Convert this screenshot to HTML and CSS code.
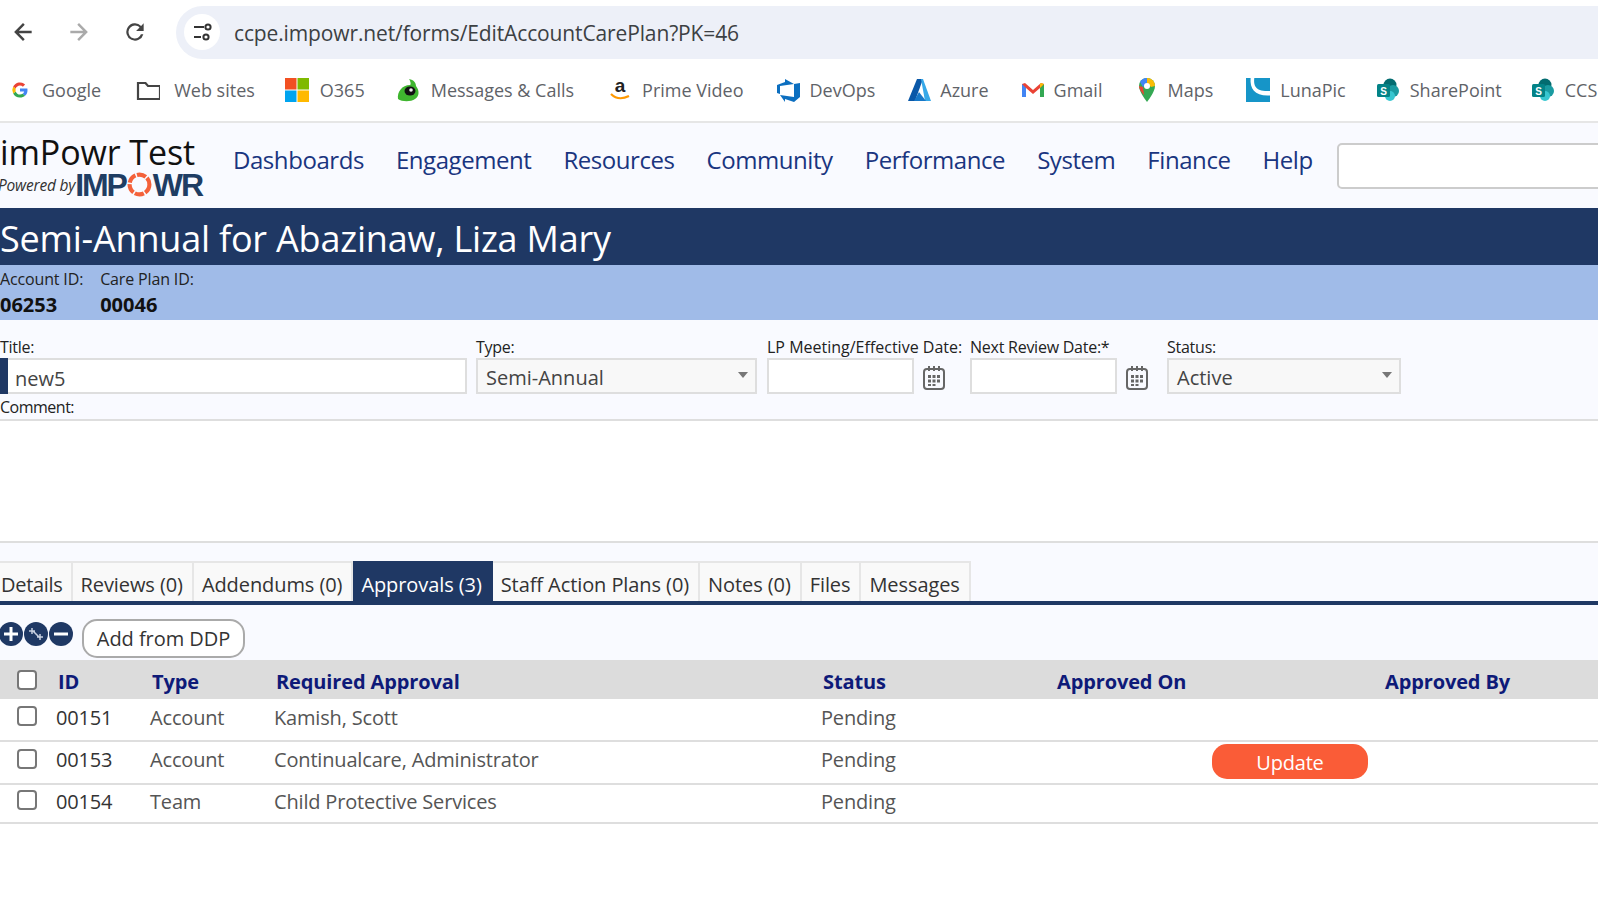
FILE: index.html
```html
<!DOCTYPE html>
<html lang="en">
<head>
<meta charset="utf-8">
<title>Semi-Annual for Abazinaw, Liza Mary</title>
<link rel="stylesheet" href="styles.css">
</head>
<body>
<div class="toolbar">
  <svg class="nav-ic" viewBox="0 0 24 24"><path d="M20 10.800H8.200l5.400-5.400L12 3.800 3.800 12l8.200 8.200 1.600-1.600-5.400-5.400H20z" fill="#444"/></svg>
  <svg class="nav-ic" viewBox="0 0 24 24"><path d="M4 10.800h11.800l-5.400-5.400L12 3.800l8.200 8.200-8.200 8.200-1.600-1.600 5.400-5.400H4z" fill="#aaa"/></svg>
  <svg class="nav-ic" viewBox="0 0 24 24"><path d="M17.650 6.350A8 8 0 1 0 19.730 14h-2.280A5.900 5.900 0 1 1 12 6.100c1.640 0 3.100.68 4.170 1.730L13 11h7V4z" fill="#444"/></svg>
  <div class="omnibox">
    <span class="site-ic"><svg viewBox="0 0 24 24" width="24" height="24"><path d="M4 7h10M4 17h7" stroke="#333" stroke-width="2.200" fill="none"/><circle cx="18" cy="7" r="2.600" fill="none" stroke="#333" stroke-width="2"/><circle cx="16" cy="17" r="2.600" fill="none" stroke="#333" stroke-width="2"/></svg></span>
    <span class="url">ccpe.impowr.net/forms/EditAccountCarePlan?PK=46</span>
  </div>
</div>
<div class="bookmarks">
  <span class="bm bm-g"><svg viewBox="0 0 24 24"><path d="M21 12.200c0-.7-.1-1.300-.2-1.900H12v3.600h5a4.300 4.300 0 0 1-1.900 2.800l3 2.300c1.800-1.600 2.900-4 2.900-6.800z" fill="#4285f4"/><path d="M12 21c2.500 0 4.500-.8 6.100-2.100l-3-2.300c-.8.600-1.900.900-3.100.900-2.400 0-4.400-1.600-5.100-3.800l-3.100 2.400A9 9 0 0 0 12 21z" fill="#34a853"/><path d="M6.900 13.700a5.400 5.400 0 0 1 0-3.400L3.800 7.900a9 9 0 0 0 0 8.200z" fill="#fbbc05"/><path d="M12 6.600c1.300 0 2.500.5 3.500 1.400l2.600-2.600A9 9 0 0 0 3.800 7.900l3.100 2.400C7.600 8.200 9.600 6.600 12 6.600z" fill="#ea4335"/></svg>Google</span>
  <span class="bm bm-f"><svg viewBox="0 0 24 24"><path d="M2 5v16h22V8H12L9.500 5H2z" fill="none" stroke="#444" stroke-width="2.200"/></svg>Web sites</span>
  <span class="bm bm-o"><svg viewBox="0 0 24 24"><rect width="11.500" height="11.500" fill="#f25022"/><rect x="12.500" width="11.500" height="11.500" fill="#7fba00"/><rect y="12.500" width="11.500" height="11.500" fill="#00a4ef"/><rect x="12.500" y="12.500" width="11.500" height="11.500" fill="#ffb900"/></svg>O365</span>
  <span class="bm bm-m"><svg viewBox="0 0 24 24"><path d="M1 21c-1-7 4-14 12-14 1 0 1-3-1-6 5 1 7 4 7 7 4 5 3 11-1 13-4 3-13 3-17 0z" fill="#3fb52f"/><ellipse cx="13" cy="13" rx="5.500" ry="4.500" fill="#111"/><circle cx="14" cy="12" r="1.800" fill="#eee"/></svg>Messages &amp; Calls</span>
  <span class="bm bm-a"><svg viewBox="0 0 24 24"><text x="12" y="14" class="amz">a</text><path d="M3 16c5 5 12 5 18 2" fill="none" stroke="#f90" stroke-width="2.200"/></svg>Prime Video</span>
  <span class="bm bm-d"><svg viewBox="0 0 24 24"><path d="M24 5v14l-6 5-9-3v3l-5-7 14 2V6zM18 6L9 1v3L1 7v8l3 1V8z" fill="#0c6fc0"/></svg>DevOps</span>
  <span class="bm bm-z"><svg viewBox="0 0 24 24"><path d="M9 1h6L7 23H0z" fill="#0a58a8"/><path d="M13 1h2l8 22h-6z" fill="#36a8e8"/><path d="M11 14l7 9H6z" fill="#1778c8"/></svg>Azure</span>
  <span class="bm bm-l"><svg viewBox="0 0 24 24"><path d="M1 6v13h4V10l7 6 7-6v9h4V6l-3-1-8 7-8-7z" fill="#ea4335"/><path d="M1 6v13h4V10z" fill="#4285f4"/><path d="M19 10v9h4V6z" fill="#34a853"/><path d="M20 5l3 1-4 4v-4z" fill="#fbbc05"/></svg>Gmail</span>
  <span class="bm bm-p"><svg viewBox="0 0 24 24"><path d="M12 0a8 8 0 0 0-8 8c0 6 8 16 8 16s8-10 8-16a8 8 0 0 0-8-8z" fill="#34a853"/><path d="M5 4a8 8 0 0 1 7-4v5L8 9z" fill="#4285f4"/><path d="M12 0a8 8 0 0 1 8 8l-4 1-4-4z" fill="#fbbc05"/><path d="M4 8l4 1 1 8c-2-2-5-6-5-9z" fill="#ea4335"/><circle cx="12" cy="8" r="3" fill="#fff"/></svg>Maps</span>
  <span class="bm bm-u"><svg viewBox="0 0 26 26"><rect width="26" height="26" fill="#1695c8"/><path d="M5 0h4c-1 8 1 15 17 14v5C10 20 4 12 5 0z" fill="#fff"/></svg>LunaPic</span>
  <span class="bm bm-s"><svg viewBox="0 0 24 24"><circle cx="14" cy="7" r="6.500" fill="#036c70"/><circle cx="17" cy="13" r="6" fill="#1a9ba1"/><circle cx="14" cy="18" r="5" fill="#37c6d0"/><rect x="1" y="6" width="13" height="13" rx="1.500" fill="#038387"/><text x="7.500" y="16.500" class="sp">S</text></svg>SharePoint</span>
  <span class="bm bm-c"><svg viewBox="0 0 24 24"><circle cx="14" cy="7" r="6.500" fill="#036c70"/><circle cx="17" cy="13" r="6" fill="#1a9ba1"/><circle cx="14" cy="18" r="5" fill="#37c6d0"/><rect x="1" y="6" width="13" height="13" rx="1.500" fill="#038387"/><text x="7.500" y="16.500" class="sp">S</text></svg>CCS</span>
</div>
<header class="site-head">
  <div class="brand">
    <div class="brand-name">imPowr Test</div>
    <div class="brand-sub"><span class="powered">Powered by</span><span class="logo">IMP<svg class="logo-o" viewBox="0 0 24 24"><circle cx="12" cy="12" r="9.500" fill="none" stroke="#f4613a" stroke-width="4" stroke-dasharray="9 1.500"/></svg>WR</span></div>
  </div>
  <nav class="menu">
    <a>Dashboards</a><a>Engagement</a><a>Resources</a><a>Community</a><a>Performance</a><a>System</a><a>Finance</a><a>Help</a>
  </nav>
  <div class="search"></div>
</header>
<h1 class="title-bar">Semi-Annual for Abazinaw, Liza Mary</h1>
<div class="id-bar">
  <div><div class="id-label">Account ID:</div><div class="id-val">06253</div></div>
  <div><div class="id-label">Care Plan ID:</div><div class="id-val">00046</div></div>
</div>
<section class="form">
  <div class="fields">
    <div class="field f-title"><label>Title:</label><div class="input title-input"><span class="req"></span><span class="title-val">new5</span></div></div>
    <div class="field f-type"><label>Type:</label><div class="input select">Semi-Annual<i class="caret"></i></div></div>
    <div class="field f-date"><label>LP Meeting/Effective Date:</label><div class="date-row"><div class="input date"></div><svg class="cal" viewBox="0 0 22 24"><rect x="1" y="3" width="20" height="20" rx="3" fill="none" stroke="#666" stroke-width="2"/><path d="M6 0v5M11 0v5M16 0v5" stroke="#666" stroke-width="2"/><path d="M5 9h3v3H5zM9.500 9h3v3h-3zM14 9h3v3h-3zM5 13.500h3v3H5zM9.500 13.500h3v3h-3zM14 13.500h3v3h-3zM5 18h3v2H5zM9.500 18h3v2h-3z" fill="#666"/></svg></div></div>
    <div class="field f-next"><label>Next Review Date:*</label><div class="date-row"><div class="input date"></div><svg class="cal" viewBox="0 0 22 24"><rect x="1" y="3" width="20" height="20" rx="3" fill="none" stroke="#666" stroke-width="2"/><path d="M6 0v5M11 0v5M16 0v5" stroke="#666" stroke-width="2"/><path d="M5 9h3v3H5zM9.500 9h3v3h-3zM14 9h3v3h-3zM5 13.500h3v3H5zM9.500 13.500h3v3h-3zM14 13.500h3v3h-3zM5 18h3v2H5zM9.500 18h3v2h-3z" fill="#666"/></svg></div></div>
    <div class="field f-status"><label>Status:</label><div class="input select">Active<i class="caret"></i></div></div>
  </div>
  <label class="comment-label">Comment:</label>
</section>
<div class="comment-box"></div>
<div class="tabs">
  <a class="tab">Details</a><a class="tab">Reviews (0)</a><a class="tab">Addendums (0)</a><a class="tab active">Approvals (3)</a><a class="tab">Staff Action Plans (0)</a><a class="tab">Notes (0)</a><a class="tab">Files</a><a class="tab">Messages</a>
</div>
<div class="actions">
  <div class="round-btns">
    <svg viewBox="0 0 24 24"><circle cx="12" cy="12" r="12" fill="#1f3864"/><path d="M12 5v14M5 12h14" stroke="#fff" stroke-width="3"/></svg>
    <svg viewBox="0 0 24 24"><circle cx="12" cy="12" r="12" fill="#1f3864"/><path d="M8 6v6M5 9h6M16 12v6M13 15h6M9 9l7 7" stroke="#c8d0e0" stroke-width="1.500"/></svg>
    <svg viewBox="0 0 24 24"><circle cx="12" cy="12" r="12" fill="#1f3864"/><path d="M5 12h14" stroke="#fff" stroke-width="3"/></svg>
  </div>
  <button class="ddp" type="button">Add from DDP</button>
</div>
<table class="grid">
  <colgroup><col class="c-check"><col class="c-id"><col class="c-type"><col class="c-req"><col class="c-status"><col class="c-on"><col class="c-by"></colgroup>
  <thead>
    <tr><th><i class="cb"></i></th><th>ID</th><th>Type</th><th>Required Approval</th><th>Status</th><th>Approved On</th><th>Approved By</th></tr>
  </thead>
  <tbody>
    <tr class="r1"><td><i class="cb"></i></td><td>00151</td><td>Account</td><td>Kamish, Scott</td><td>Pending</td><td></td><td></td></tr>
    <tr class="r2"><td><i class="cb"></i></td><td>00153</td><td>Account</td><td>Continualcare, Administrator</td><td>Pending</td><td class="update-cell" colspan="2"><button class="update" type="button">Update</button></td></tr>
    <tr class="r3"><td><i class="cb"></i></td><td>00154</td><td>Team</td><td>Child Protective Services</td><td>Pending</td><td></td><td></td></tr>
  </tbody>
</table>
</body>
</html>
```
FILE: styles.css
```css
* { box-sizing: border-box; }
html, body { margin: 0; height: 100%; overflow: hidden; }
body {
  width: 1598px;
  height: 914px;
  background: #fff;
  font-family: "Open Sans", "Noto Sans", sans-serif;
  color: #333;
}

/* browser chrome */
.toolbar {
  height: 62px;
  display: flex;
  align-items: center;
  padding: 2px 0 0 10px;
  gap: 30px;
  background: #fff;
}
.nav-ic { width: 26px; height: 26px; flex: none; }
.omnibox {
  flex: 1;
  margin-left: -2px;
  margin-right: -60px;
  height: 53px;
  background: #edf0f8;
  border-radius: 27px;
  display: flex;
  align-items: center;
  padding-left: 8px;
  gap: 14px;
}
.site-ic {
  width: 36px;
  height: 36px;
  border-radius: 50%;
  background: #fff;
  display: flex;
  align-items: center;
  justify-content: center;
}
.url { font-size: 21px; color: #3c4043; letter-spacing: -0.13px; padding-top: 2px; }
.bookmarks {
  height: 61px;
  display: flex;
  align-items: center;
  padding: 0 0 3px 10px;
  overflow: hidden;
  border-bottom: 2px solid #e6e6e6;
  white-space: nowrap;
  font-size: 18px;
  color: #5f6368;
  letter-spacing: 0;
  background: #fff;
}
.bm { display: flex; align-items: center; gap: 10px; flex: none; }
.bm svg { width: 24px; height: 24px; flex: none; }
.bm-g { gap: 12px; }
.bm-g svg { width: 20px; height: 20px; }
.bm-f { margin-left: 35px; gap: 14px; }
.bm-o { margin-left: 30px; gap: 11px; }
.bm-m { margin-left: 32px; }
.bm-a { margin-left: 34px; }
.bm-d { margin-left: 32px; }
.bm-z { margin-left: 33px; gap: 8px; }
.bm-l { margin-left: 32px; gap: 9px; }
.bm-p { margin-left: 33px; gap: 8px; }
.bm-u { margin-left: 33px; }
.bm-s { margin-left: 30px; }
.bm-c { margin-left: 29px; }
.amz { font: 700 19px "Liberation Sans", sans-serif; text-anchor: middle; fill: #222; }
.sp { font: 700 10px "Liberation Sans", sans-serif; text-anchor: middle; fill: #fff; }

/* site header */
.site-head {
  height: 85px;
  background: #f9faff;
  display: flex;
  align-items: center;
  position: relative;
  overflow: hidden;
}
.brand { width: 233px; flex: none; }
.brand-name { font-size: 34px; line-height: 38px; color: #111; letter-spacing: -0.1px; white-space: nowrap; }
.brand-sub { display: flex; align-items: center; height: 28px; margin-left: -2px; white-space: nowrap; }
.powered { font-size: 15.500px; font-style: italic; color: #333; letter-spacing: -0.2px; }
.logo {
  font: 700 32px/1 "Liberation Sans", sans-serif;
  color: #1f3d63;
  display: flex;
  align-items: center;
  letter-spacing: -2.100px;
}
.logo-o { width: 25px; height: 25px; margin: 0 1px; }
.menu { display: flex; gap: 32px; white-space: nowrap; font-size: 24px; letter-spacing: -0.44px; color: #1a3580; margin-bottom: 12px; }
.search {
  flex: none;
  width: 340px;
  height: 46px;
  margin-left: 24px;
  background: #fff;
  border: 2px solid #ccc;
  border-radius: 5px;
}

.title-bar {
  margin: 0;
  height: 57px;
  background: #1f3864;
  color: #fff;
  font-weight: 400;
  font-size: 36px;
  line-height: 62px;
  letter-spacing: -0.2px;
  white-space: nowrap;
}
.id-bar {
  height: 55px;
  background: #a0bbe8;
  display: flex;
  gap: 17px;
  padding-top: 4px;
  color: #111;
}
.id-label { font-size: 16px; line-height: 21px; letter-spacing: -0.15px; color: #222; }
.id-val { font-size: 20px; font-weight: 700; line-height: 30px; letter-spacing: 0; }

/* form */
.form { height: 99px; background: #f9faff; padding-top: 17px; position: relative; }
.fields { display: flex; }
.field label, .comment-label { display: block; font-size: 16px; line-height: 21px; letter-spacing: -0.25px; color: #222; white-space: nowrap; }
.f-date label { letter-spacing: 0; }
.comment-label { letter-spacing: -0.5px; }
.input {
  height: 36px;
  border: 2px solid #dedede;
  background: #fff;
  font-size: 20px;
  line-height: 35px;
  color: #444;
  letter-spacing: 0;
}
.f-title { width: 476px; }
.title-input { width: 467px; display: flex; }
.req { width: 8px; margin: -2px 0 -2px -2px; background: #1f3864; flex: none; }
.title-val { margin-left: 7px; padding-top: 1px; }
.select { background: #f8f8f8; padding-left: 8px; position: relative; }
.caret {
  position: absolute;
  right: 7px;
  top: 12px;
  border-left: 5.500px solid transparent;
  border-right: 5.500px solid transparent;
  border-top: 6px solid #777;
}
.f-type { width: 291px; }
.f-type .select { width: 281px; }
.f-date { width: 203px; }
.f-next { width: 197px; }
.f-status .select { width: 234px; }
.date-row { display: flex; align-items: center; gap: 9px; }
.date { width: 147px; flex: none; }
.cal { width: 22px; height: 24px; flex: none; margin-top: 3px; }
.comment-label { position: absolute; left: 0; top: 77px; }

.comment-box {
  height: 124px;
  background: #fff;
  border-top: 2px solid #dedede;
  border-bottom: 2px solid #dedede;
}

/* tabs */
.tabs {
  height: 62px;
  background: #f9faff;
  padding-top: 18px;
  display: flex;
  border-bottom: 4px solid #1f3864;
  white-space: nowrap;
}
.tab {
  height: 40px;
  background: #f9f9f9;
  border: 2px solid #e6e6e6;
  border-width: 2px 2px 0 0;
  padding: 0 9px 0 8px;
  font-size: 20px;
  line-height: 44px;
  letter-spacing: -0.085px;
  color: #333;
}
.tab:first-child { padding: 0 8px 0 1px; letter-spacing: -0.3px; }
.tab.active { background: #1f3864; color: #fff; border-color: #1f3864; }

.actions {
  height: 55px;
  background: #f9faff;
  display: flex;
  align-items: center;
  padding-top: 11px;
}
.round-btns { display: flex; margin-left: -1px; margin-bottom: 8px; }
.round-btns svg { width: 24px; height: 24px; margin-right: 1px; flex: none; }
.ddp {
  margin-left: 8px;
  height: 39px;
  width: 163px;
  background: #fff;
  border: 2px solid #aaa;
  border-radius: 15px;
  font: 20px "Open Sans", sans-serif;
  letter-spacing: -0.05px;
  color: #333;
  padding: 0;
}

/* grid */
.grid { width: 1598px; border-collapse: collapse; table-layout: fixed; }
.c-check { width: 56px; }
.c-id { width: 94px; }
.c-type { width: 124px; }
.c-req { width: 547px; }
.c-status { width: 234px; }
.c-on { width: 328px; }
.grid th {
  height: 39px;
  background: #dcdcdc;
  text-align: left;
  font-size: 20px;
  font-weight: 700;
  color: #0e1a78;
  letter-spacing: -0.13px;
  padding: 3px 0 0 2px;
  white-space: nowrap;
}
.grid th:first-child { padding: 0; }
.grid td {
  font-size: 20px;
  letter-spacing: -0.17px;
  color: #555;
  padding: 0 0 4px;
  border-bottom: 2px solid #dedede;
  white-space: nowrap;
}
.r1 td { height: 42px; }
.r2 td { height: 43px; padding-bottom: 6px; }
.r2 td.update-cell { padding: 0 0 2px; }
.r3 td { height: 39px; }
.grid td:nth-child(2) { color: #333; }
.cb {
  display: block;
  width: 20px;
  height: 20px;
  margin-left: 17px;
  margin-top: -3px;
  background: #fff;
  border: 2px solid #777;
  border-radius: 4px;
}
.r2 .cb { margin-top: -2px; }
.grid th .cb { margin-top: 0; }
.update {
  display: block;
  margin-left: 157px;
  width: 156px;
  height: 35px;
  background: #fa5c37;
  color: #fff;
  border: 0;
  border-radius: 15px;
  font: 20px "Open Sans", sans-serif;
  letter-spacing: -0.2px;
  padding: 2px 0 0;
}
```
